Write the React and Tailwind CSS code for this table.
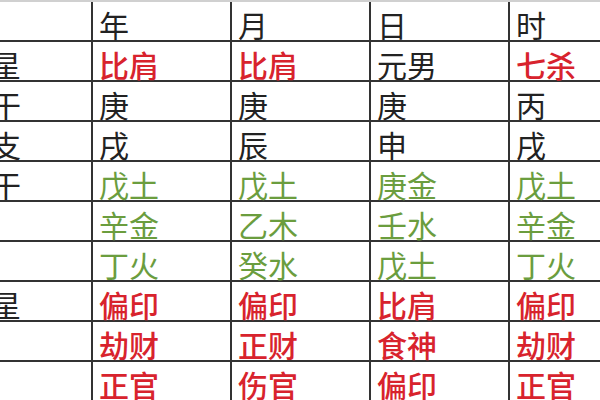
import React from "react";

const R = "r", G = "g", K = "k";
const rows = [
  { label: "", cells: [["年", K], ["月", K], ["日", K], ["时", K]] },
  { label: "主星", cells: [["比肩", R], ["比肩", R], ["元男", K], ["七杀", R]] },
  { label: "天干", cells: [["庚", K], ["庚", K], ["庚", K], ["丙", K]] },
  { label: "地支", cells: [["戌", K], ["辰", K], ["申", K], ["戌", K]] },
  { label: "藏干", cells: [["戊土", G], ["戊土", G], ["庚金", G], ["戊土", G]] },
  { label: "", cells: [["辛金", G], ["乙木", G], ["壬水", G], ["辛金", G]] },
  { label: "", cells: [["丁火", G], ["癸水", G], ["戊土", G], ["丁火", G]] },
  { label: "副星", cells: [["偏印", R], ["偏印", R], ["比肩", R], ["偏印", R]] },
  { label: "", cells: [["劫财", R], ["正财", R], ["食神", R], ["劫财", R]] },
  { label: "", cells: [["正官", R], ["伤官", R], ["偏印", R], ["正官", R]] },
];

function cls(c) {
  if (c === R) return "text-[#d8232d] font-medium";
  if (c === G) return "text-[#6b9d3e]";
  return "text-[#222222]";
}

export default function App() {
  return (
    <div
      className="w-[600px] h-[400px] overflow-hidden bg-white border-t-2 border-[#d0d0d0]"
      style={{ fontFamily: '"Noto Sans CJK SC", "Noto Sans", sans-serif' }}
    >
      <div className="w-[700px]">
        {rows.map((row, i) => (
          <div key={i} className="flex h-[40px] border-b-2 border-[#333333]">
            <div className="w-[93px] shrink-0 border-r-2 border-[#333333] overflow-hidden flex items-center pt-[5px]">
              <span className="ml-[-39px] whitespace-nowrap text-[30px] leading-none text-[#222222]">
                {row.label}
              </span>
            </div>
            {row.cells.map(([t, c], j) => (
              <div
                key={j}
                className="w-[139px] shrink-0 border-r-2 border-[#333333] flex items-center pl-[6px] pt-[5px]"
              >
                <span className={"whitespace-nowrap text-[30px] leading-none " + cls(c)}>{t}</span>
              </div>
            ))}
          </div>
        ))}
      </div>
    </div>
  );
}
